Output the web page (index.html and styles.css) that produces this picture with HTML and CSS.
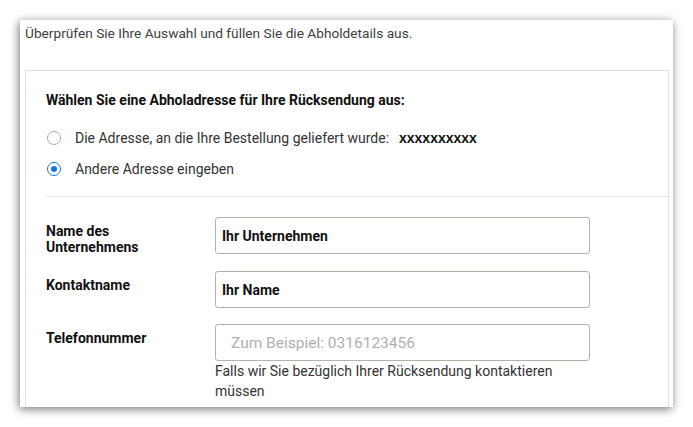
FILE: index.html
```html
<!DOCTYPE html>
<html lang="de">
<head>
<meta charset="utf-8">
<link rel="stylesheet" href="styles.css">
</head>
<body>
<div class="window">
  <p class="intro">Überprüfen Sie Ihre Auswahl und füllen Sie die Abholdetails aus.</p>
  <div class="card">
    <h2 class="heading">Wählen Sie eine Abholadresse für Ihre Rücksendung aus:</h2>
    <div class="options">
      <div class="option">
        <span class="radio"></span>
        <span class="opt-text">Die Adresse, an die Ihre Bestellung geliefert wurde:</span>
        <span class="opt-value">xxxxxxxxxx</span>
      </div>
      <div class="option">
        <span class="radio checked"></span>
        <span class="opt-text">Andere Adresse eingeben</span>
      </div>
    </div>
    <div class="divider"></div>
    <div class="form">
      <div class="row">
        <div class="label">Name des<br>Unternehmens</div>
        <div class="field">
          <div class="input"><span class="value">Ihr Unternehmen</span></div>
        </div>
      </div>
      <div class="row">
        <div class="label">Kontaktname</div>
        <div class="field">
          <div class="input"><span class="value">Ihr Name</span></div>
        </div>
      </div>
      <div class="row">
        <div class="label">Telefonnummer</div>
        <div class="field">
          <div class="input"><span class="placeholder">Zum Beispiel: 0316123456</span></div>
          <div class="help">Falls wir Sie bezüglich Ihrer Rücksendung kontaktieren müssen</div>
        </div>
      </div>
    </div>
  </div>
</div>
</body>
</html>
```

FILE: styles.css
```css
html, body {
  margin: 0;
  padding: 0;
  background: #ffffff;
}
body {
  font-family: Roboto, "Liberation Sans", sans-serif;
  color: #333333;
  width: 693px;
  height: 427px;
  overflow: hidden;
}
.window {
  margin: 20px 0 0 20px;
  width: 653px;
  height: 387px;
  background: #ffffff;
  box-shadow: -1px 2px 9px rgba(0, 0, 0, 0.55);
  overflow: hidden;
}
.intro {
  margin: 0;
  padding: 3px 0 0 5px;
  font-size: 13.7px;
  line-height: 20px;
  color: #404040;
}
.card {
  margin: 27px 4px 0 5px;
  border: 1px solid #e0e0e0;
  border-bottom: none;
  height: 400px;
}
.heading {
  margin: 0;
  padding: 21px 0 0 20px;
  font-size: 14px;
  line-height: 16px;
  font-weight: 700;
  color: #111111;
}
.options {
  padding: 20px 0 0 21px;
  display: flex;
  flex-direction: column;
  gap: 11px;
}
.option {
  display: flex;
  align-items: center;
  height: 20px;
  font-size: 14px;
}
.radio {
  width: 12px;
  height: 12px;
  border: 1.5px solid #a8a8a8;
  border-radius: 50%;
  box-sizing: content-box;
  flex: none;
  display: flex;
  align-items: center;
  justify-content: center;
}
.radio.checked {
  border-color: #1a73e8;
}
.radio.checked::after {
  content: "";
  width: 6px;
  height: 6px;
  border-radius: 50%;
  background: #1a73e8;
}
.opt-text {
  margin-left: 14px;
  color: #333333;
}
.opt-value {
  margin-left: 10px;
  font-family: "Liberation Sans", Arial, sans-serif;
  font-weight: 700;
  font-size: 14px;
  color: #111111;
}
.divider {
  margin: 17px 0 0 20px;
  border-top: 1px solid #e3e3e3;
}
.form {
  padding: 20px 0 0 20px;
  display: flex;
  flex-direction: column;
  gap: 16px;
}
.row {
  display: flex;
  align-items: flex-start;
}
.label {
  width: 169px;
  flex: none;
  padding-top: 6px;
  font-size: 14px;
  line-height: 16px;
  font-weight: 700;
  color: #111111;
}
.field {
  width: 375px;
}
.input {
  height: 37px;
  box-sizing: border-box;
  border: 1px solid #b6b1aa;
  border-radius: 3px;
  display: flex;
  align-items: center;
}
.value {
  padding-left: 6px;
  font-family: Roboto, "Liberation Sans", sans-serif;
  font-weight: 700;
  font-size: 14px;
  color: #111111;
}
.placeholder {
  padding-left: 15px;
  font-size: 15.5px;
  color: #b0b0b0;
}
.help {
  font-size: 14px;
  line-height: 20px;
  color: #333333;
}
```
